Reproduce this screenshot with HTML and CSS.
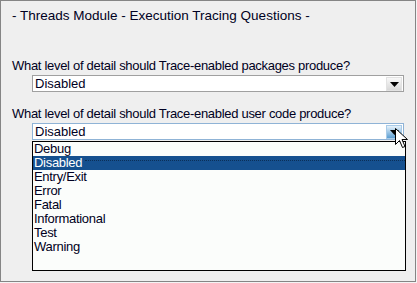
FILE: index.html
```html
<!DOCTYPE html>
<html lang="en">
<head>
    <meta charset="UTF-8">
    <title>Execution Tracing Questions</title>
    <link rel="stylesheet" href="styles.css">
</head>
<body>
    <div class="panel">
        <div class="title">- Threads Module - Execution Tracing Questions -</div>

        <div class="question">
            <div class="label">What level of detail should Trace-enabled packages produce?</div>
            <div class="combo">
                <span class="combo-value">Disabled</span>
                <span class="combo-button">
                    <svg width="9" height="5" viewBox="0 0 9 5"><path d="M0 0H9L4.5 5Z" fill="#000"/></svg>
                </span>
            </div>
        </div>

        <div class="question">
            <div class="label">What level of detail should Trace-enabled user code produce?</div>
            <div class="combo combo-open">
                <span class="combo-value">Disabled</span>
                <span class="combo-button">
                    <svg width="9" height="5" viewBox="0 0 9 5"><path d="M0 0H9L4.5 5Z" fill="#000"/></svg>
                </span>
                <!-- mouse pointer over the open button -->
                <svg class="cursor" width="13" height="20" viewBox="0 0 13 20">
                    <path d="M0.5 0.5V16.5L4.5 12.5L7.5 19.5L10 18.5L7 11.5H12.5Z" fill="#fff" stroke="#000" stroke-width="1"/>
                </svg>
            </div>
            <ul class="dropdown">
                <li>Debug</li>
                <li class="selected">Disabled</li>
                <li>Entry/Exit</li>
                <li>Error</li>
                <li>Fatal</li>
                <li>Informational</li>
                <li>Test</li>
                <li>Warning</li>
            </ul>
        </div>
    </div>
</body>
</html>
```

FILE: styles.css
```css
body {
    margin: 0;
    background-color: #f4f4f4;
    font-family: "Liberation Sans", Arial, sans-serif;
    font-size: 13px;
    color: #000022;
}

.panel {
    width: 414px;
    height: 280px;
    border: 1px solid #858585;
    background-color: #efefef;
}

.title {
    padding: 7px 0 0 11px;
    font-size: 13.5px;
    line-height: 15px;
}

.question {
    padding-left: 10px;
}
.title + .question {
    margin-top: 35px;
}
.question + .question {
    margin-top: 14px;
}

.label {
    padding-left: 1px;
    letter-spacing: -0.3px;
    line-height: 15px;
    margin-bottom: 2px;
}

.combo {
    position: relative;
    display: flex;
    align-items: center;
    margin-left: 21px;
    width: 370px;
    height: 15px;
    border: 1px solid #a0a0a0;
    background-color: #ffffff;
}
.combo-value {
    flex: 1;
    padding-left: 2px;
    line-height: 15px;
}
.combo-button {
    display: flex;
    align-items: center;
    justify-content: center;
    width: 14px;
    height: 12px;
    margin-right: 1px;
    border: 1px solid #e2e2e2;
    background: linear-gradient(#f8f8f8, #d8d8d8);
}
.combo-button svg {
    display: block;
    margin-top: 1px;
}

.combo-open {
    border-color: #8fb3d6;
}
.combo-open .combo-button {
    border-color: #a9cbe8;
    background: linear-gradient(#e6f2fb, #5c9fd3);
}

.cursor {
    position: absolute;
    left: 362px;
    top: 4px;
}

.dropdown {
    list-style: none;
    margin: 1px 0 0 21px;
    padding: 0;
    width: 372px;
    height: 128px;
    border: 1px solid #000000;
    background-color: #fbfdfb;
    letter-spacing: -0.3px;
}
.dropdown li {
    height: 14px;
    line-height: 14px;
    padding-left: 1px;
}
.dropdown li.selected {
    position: relative;
    background-color: #15508f;
    color: #ffffff;
}
.dropdown li.selected::after {
    content: "";
    position: absolute;
    left: 52px;
    right: 0;
    top: 4px;
    border-top: 1px dotted #0b2f57;
}
```
